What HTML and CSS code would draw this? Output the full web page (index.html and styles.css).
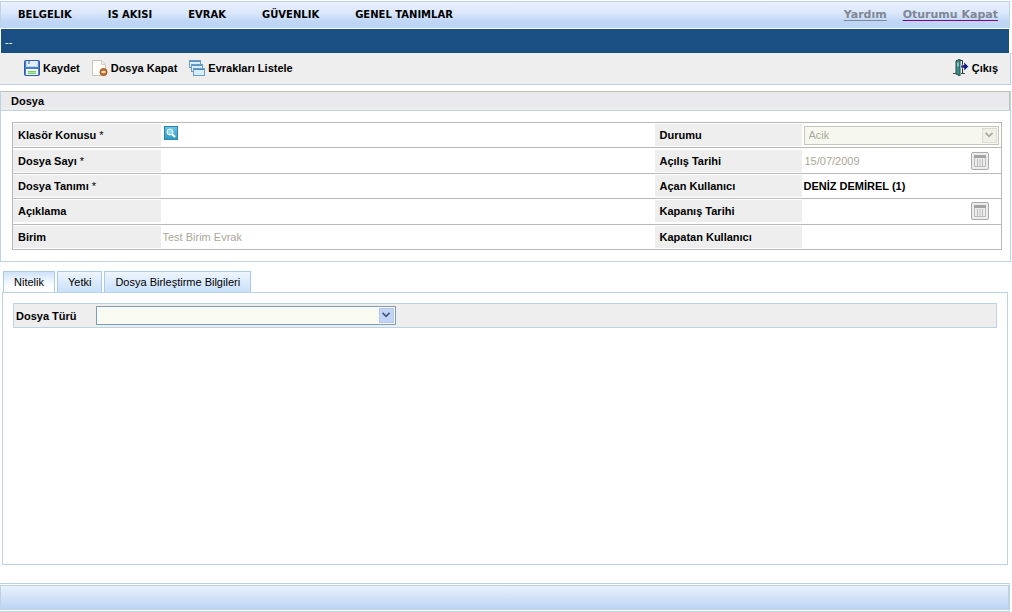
FILE: index.html
```html
<!DOCTYPE html>
<html lang="tr">
<head>
<meta charset="utf-8">
<title>Dosya</title>
<link rel="stylesheet" href="styles.css">
</head>
<body>
<header class="menubar">
  <nav class="menu">
    <a class="menu-item" href="#">BELGELIK</a>
    <a class="menu-item" href="#">IS AKISI</a>
    <a class="menu-item" href="#">EVRAK</a>
    <a class="menu-item" href="#">GÜVENLIK</a>
    <a class="menu-item" href="#">GENEL TANIMLAR</a>
  </nav>
  <div class="session">
    <a class="session-link" href="#">Yardım</a>
    <a class="session-link visited" href="#">Oturumu Kapat</a>
  </div>
</header>
<div class="pathbar">--</div>
<div class="toolbar">
  <button class="tool" type="button">
    <svg width="16" height="16" viewBox="0 0 16 16"><rect x=".5" y=".5" width="15" height="15" rx="1" fill="#4d80ce" stroke="#2d5ba8"/><path d="M2 1h12v6H2z" fill="#bdd6f2"/><path d="M3 1h10v5H3z" fill="#e4f0fb"/><path d="M5 1v3" stroke="#2d5ba8"/><path d="M2 9h12v6H2z" fill="#f2f8ff"/><path d="M4 11h8v3H4z" fill="#7bc763"/><path d="M4 12.500h8" stroke="#b4e39f"/></svg>
    Kaydet</button>
  <button class="tool" type="button">
    <svg width="16" height="16" viewBox="0 0 16 16"><path d="M.5.500h9l4 4v11H.500z" fill="#fffefb" stroke="#c9c3ba"/><path d="M9.500.500v4h4" fill="#eee" stroke="#d3cfc7"/><circle cx="11.500" cy="12" r="3.500" fill="#cf7529" stroke="#9d4f1b"/><path d="M9.500 12h4" stroke="#fff" stroke-width="1.500"/></svg>
    Dosya Kapat</button>
  <button class="tool" type="button">
    <svg width="16" height="16" viewBox="0 0 16 16"><g fill="#d9ecfa" stroke="#6a9cc4"><rect x=".5" y=".5" width="11" height="7"/><path d="M1 1.500h10" stroke="#5592c6"/><rect x="2.500" y="4.500" width="11" height="7"/><path d="M3 5.500h10" stroke="#5592c6"/><rect x="4.500" y="8.500" width="11" height="7"/><path d="M5 9.500h10" stroke="#4c8cc4"/></g></svg>
    Evrakları Listele</button>
  <button class="tool tool-exit" type="button">
    <svg width="16" height="17" viewBox="0 0 16 17"><path d="M3.500 14.500v-13h6v13" fill="#e9eeee" stroke="#333"/><path d="M3 2l4-2v17l-4-2z" fill="#3c8b86" stroke="#1f504f"/><path d="M0 14.500h3M8 14.500h4" stroke="#444"/><path d="M4 4l2-1v4l-2 1z" fill="#8fc5bf"/><path d="M8 6h3V3l4.500 4.500L11 12V9H8z" fill="#111c86" stroke="#fff" stroke-width=".5"/></svg>
    Çıkış</button>
</div>

<main class="main">
  <section class="file">
    <h1 class="file-title">Dosya</h1>
    <div class="file-body">
      <table class="form">
        <colgroup><col class="c-label"><col><col class="c-label-b"><col class="c-value"></colgroup>
        <tr>
          <th scope="row"><span class="name">Klasör Konusu <i>*</i></span></th>
          <td><button class="search" type="button" aria-label="Ara"><svg width="14" height="14" viewBox="0 0 14 14"><rect x=".5" y=".5" width="13" height="13" fill="none" stroke="#2b87ad"/><circle cx="6" cy="6" r="3" fill="#8fd8f2" stroke="#fff"/><path d="M8 8l3 3" stroke="#fff" stroke-width="2"/></svg></button></td>
          <th scope="row"><label class="name" for="durumu">Durumu</label></th>
          <td><div class="select off"><select id="durumu" disabled><option>Acik</option></select><svg class="arrow" width="15" height="15" viewBox="0 0 15 15"><path d="M3 4.500l4 4 4-4" fill="none" stroke="currentColor" stroke-width="2"/></svg></div></td>
        </tr>
        <tr>
          <th scope="row"><label class="name" for="sayi">Dosya Sayı <i>*</i></label></th>
          <td><input class="text" id="sayi" type="text"></td>
          <th scope="row"><label class="name" for="acilis">Açılış Tarihi</label></th>
          <td><div class="date"><input class="text" id="acilis" type="text" value="15/07/2009" disabled><button class="cal" type="button" aria-label="Takvim" disabled><svg width="12" height="12" viewBox="0 0 12 12"><path d="M0 0h12v3H0z" fill="#a3a3a3"/><path d="M.5 3v8.500h11V3M3.500 4v7M6 4v7M8.500 4v7" fill="none" stroke="#bcbcbc"/></svg></button></div></td>
        </tr>
        <tr>
          <th scope="row"><label class="name" for="tanim">Dosya Tanımı <i>*</i></label></th>
          <td><input class="text" id="tanim" type="text"></td>
          <th scope="row"><span class="name">Açan Kullanıcı</span></th>
          <td class="user">DENİZ DEMİREL (1)</td>
        </tr>
        <tr>
          <th scope="row"><label class="name" for="aciklama">Açıklama</label></th>
          <td><input class="text" id="aciklama" type="text"></td>
          <th scope="row"><label class="name" for="kapanis">Kapanış Tarihi</label></th>
          <td><div class="date"><input class="text" id="kapanis" type="text" disabled><button class="cal" type="button" aria-label="Takvim" disabled><svg width="12" height="12" viewBox="0 0 12 12"><path d="M0 0h12v3H0z" fill="#a3a3a3"/><path d="M.5 3v8.500h11V3M3.500 4v7M6 4v7M8.500 4v7" fill="none" stroke="#bcbcbc"/></svg></button></div></td>
        </tr>
        <tr>
          <th scope="row"><label class="name" for="birim">Birim</label></th>
          <td><input class="text" id="birim" type="text" value="Test Birim Evrak" disabled></td>
          <th scope="row"><span class="name">Kapatan Kullanıcı</span></th>
          <td></td>
        </tr>
      </table>
    </div>
  </section>

  <div class="tabs" role="tablist">
    <button class="tab active" type="button" role="tab" aria-selected="true">Nitelik</button>
    <button class="tab" type="button" role="tab" aria-selected="false">Yetki</button>
    <button class="tab" type="button" role="tab" aria-selected="false">Dosya Birleştirme Bilgileri</button>
  </div>
  <section class="panel" role="tabpanel">
    <div class="kind">
      <label class="kind-label" for="tur">Dosya Türü</label>
      <div class="select on"><select id="tur"><option></option></select><svg class="arrow" width="15" height="15" viewBox="0 0 15 15"><path d="M3 4.500l4 4 4-4" fill="none" stroke="currentColor" stroke-width="2"/></svg></div>
    </div>
  </section>
</main>
<footer class="footer"><div class="footer-fill"></div></footer>
</body>
</html>
```
FILE: styles.css
```css
* {
  box-sizing: border-box;
}

body {
  margin: 0;
  padding: 1px 1px 0 0;
  min-height: 100vh;
  display: flex;
  flex-direction: column;
  background: #fff;
  color: #000;
  font: 11px/14px "Liberation Sans", Arial, sans-serif;
}

button,
input,
select {
  font: inherit;
  color: inherit;
  margin: 0;
}

svg {
  display: block;
  flex: none;
}

.menubar {
  display: flex;
  justify-content: space-between;
  align-items: center;
  height: 27px;
  margin-right: 1px;
  padding: 0 11px 0 17px;
  border: solid #bcd3e3;
  border-width: 1px 1px 0;
  background: linear-gradient(#eaf1fd, #d9e6fb 45%, #bfd6f7 75%, #bcd5f1);
  font: bold 11px/14px Verdana, "DejaVu Sans", sans-serif;
}

.menu {
  display: flex;
  gap: 36px;
  font-size: 10px;
}

.menu-item {
  color: #000;
  text-decoration: none;
}

.session {
  display: flex;
  gap: 16px;
}

.session-link {
  color: #808794;
  text-decoration: underline 1px;
  text-underline-offset: 2px;
  text-decoration-skip-ink: none;
}

.session-link.visited {
  text-decoration-color: #800080;
}

.pathbar {
  height: 24px;
  margin: 1px 2px 0 1px;
  padding: 6px 4px;
  background: #1a4f84;
  color: #fff;
}

.toolbar {
  display: flex;
  gap: 12px;
  height: 32px;
  padding: 0 12px 2px 24px;
  border: solid #bfcfdf;
  border-width: 0 1px 1px 0;
  background: #eee;
}

.tool {
  display: flex;
  align-items: center;
  gap: 3px;
  padding: 0;
  border: 0;
  background: none;
  font-weight: bold;
}

.tool-exit {
  margin-left: auto;
}

.main {
  flex: 1;
  display: flex;
  flex-direction: column;
  padding-top: 6px;
}

.file {
  border: solid #bcd3e3;
  border-width: 0 1px 1px;
}

.file-title {
  margin: 0;
  height: 20px;
  padding: 2px 10px;
  border: 1px solid #c0c0b4;
  border-bottom-color: #bcd3e3;
  border-left: 0;
  background: linear-gradient(#e9e9ee 65%, #ededeb);
  font-size: 11px;
  line-height: 14px;
}

.file-body {
  padding: 11px 8px 11px 11px;
}

.form {
  width: 100%;
  height: 128px;
  table-layout: fixed;
  border-collapse: collapse;
  border: 1px solid #b9b9b9;
}

.c-label {
  width: 148px;
}

.c-label-b {
  width: 147px;
}

.c-value {
  width: 200px;
}

.form tr {
  border-top: 1px solid #b9b9b9;
}

.form th,
.form td {
  height: 24px;
  padding: 0;
  text-align: left;
}

.form th {
  padding: 1px 0;
}

.name {
  display: block;
  padding: 4px 5px;
  background: #eee;
}

.name i {
  font-style: normal;
  font-weight: normal;
}

.form .user {
  padding-left: 2px;
  font-weight: bold;
}

.text {
  display: block;
  flex: 1;
  min-width: 0;
  width: 100%;
  padding: 2px;
  border: 0;
  background: none;
}

.text:disabled {
  color: #aca899;
}

.search {
  display: block;
  margin: 0 0 4px 3px;
  padding: 0;
  border: 0;
  background: linear-gradient(#6cc6e8, #2f97c2);
}

.date {
  display: flex;
  align-items: center;
  padding: 0 12px 0 1px;
}

.cal {
  width: 18px;
  height: 18px;
  padding: 2px;
  border: 1px solid #aaa;
  border-radius: 2px;
  background: #ececec;
}

.select {
  position: relative;
}

.select select {
  display: block;
  width: 100%;
  height: 19px;
  padding: 0 20px 0 4px;
  border: 1px solid #c9c7ba;
  border-radius: 0;
  appearance: none;
  background: #f6f7ef;
  opacity: 1;
}

.off {
  margin: 0 2px;
  color: #aca899;
}

.on {
  width: 300px;
  color: #3f5c86;
}

.on select {
  border-color: #7f9db9;
  background: #f9faf2;
}

.arrow {
  position: absolute;
  top: 2px;
  right: 2px;
  border: 1px solid #deddd0;
  background: #f0f0e8;
  pointer-events: none;
}

.on .arrow {
  border-color: #b5c8ec;
  background: #c3d4f6;
}

.tabs {
  display: flex;
  gap: 2px;
  padding: 9px 3px 0;
}

.tab {
  height: 21px;
  padding: 1px 10px;
  border: 1px solid #a9cbea;
  border-bottom: 0;
  background: linear-gradient(#eef5fd, #c9e0fa);
}

.tab.active {
  background: linear-gradient(#cfe2fa, #fff 70%);
}

.panel {
  flex: 1;
  margin: 0 3px 0 2px;
  padding: 10px;
  border: 1px solid #bcd3e3;
}

.kind {
  display: flex;
  align-items: center;
  padding: 2px;
  border: 1px solid #bcd3e3;
  background: #eee;
}

.kind-label {
  width: 80px;
  font-weight: bold;
}

.footer {
  margin: 18px 1px 0 0;
  padding: 1px 0;
  border: solid #bcd3e3;
  border-width: 1px 1px 1px 0;
}

.footer-fill {
  height: 25px;
  border: 1px solid #bcd3e3;
  background: linear-gradient(#e9f1fd, #bcd4f5);
}
```
